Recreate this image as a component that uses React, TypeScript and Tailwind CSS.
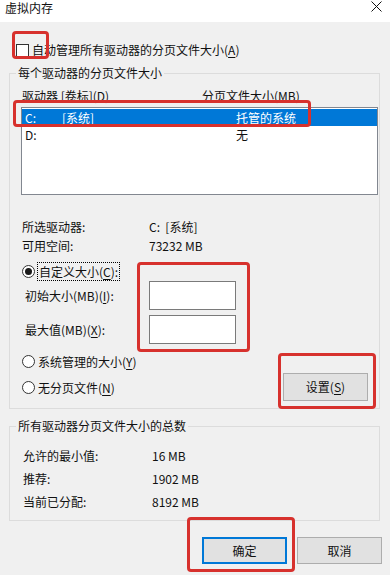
import React from 'react';

// Underlined access key, e.g. (A)
const Key: React.FC<{ k: string }> = ({ k }) => (
  <span>
    (<span className="underline underline-offset-2">{k}</span>)
  </span>
);

const Radio: React.FC<{ checked?: boolean }> = ({ checked }) => (
  <span className="flex h-[13px] w-[13px] shrink-0 items-center justify-center rounded-full border border-[#333333] bg-white">
    {checked && <span className="h-[7px] w-[7px] rounded-full bg-[#1a1a1a]" />}
  </span>
);

const RedBox: React.FC<{ className: string }> = ({ className }) => (
  <div className={`pointer-events-none absolute rounded-[4px] border-[3px] border-[#d7312d] ${className}`} />
);

const App: React.FC = () => {
  return (
    <div className="relative h-[575px] w-[390px] overflow-hidden bg-[#f0f0f0] font-['Noto_Sans_CJK_SC','Noto_Sans',sans-serif] text-[12px] leading-[16px] text-[#111]">
      {/* Title bar */}
      <div className="flex h-[22px] items-start justify-between bg-white">
        <span className="pl-[5px] pt-[0px] leading-[15px]">虚拟内存</span>
        <svg className="mr-[8px] mt-[1px]" width="11" height="11" viewBox="0 0 11 11">
          <path d="M0.5 0.5 L10.5 10.5 M10.5 0.5 L0.5 10.5" stroke="#111" strokeWidth="1" />
        </svg>
      </div>

      {/* Auto manage checkbox */}
      <div className="mt-[20px] flex h-[16px] items-center pl-[16px]">
        <span className="h-[13px] w-[13px] border border-[#333333] bg-white" />
        <span className="ml-[3px]">
          自动管理所有驱动器的分页文件大小<Key k="A" />
        </span>
      </div>

      {/* Per-drive group */}
      <fieldset className="ml-[9px] mt-[7px] w-[371px] border border-[#dcdcdc] px-0 pb-[7px]">
        <legend className="ml-[6px] px-[2px] leading-[16px]">每个驱动器的分页文件大小</legend>

        <div className="mt-[7px] flex h-[16px] pl-[12px]">
          <span className="w-[180px]">驱动器 [卷标](D)</span>
          <span>分页文件大小(MB)</span>
        </div>

        <div className="ml-[11px] mt-[3px] h-[88px] w-[357px] border border-[#828790] bg-white pt-[1px]">
          <div className="flex h-[17px] items-center bg-[#0078d7] pl-[3px] text-white">
            <span className="w-[37px]">C:</span>
            <span className="w-[174px]">[系统]</span>
            <span>托管的系统</span>
          </div>
          <div className="flex h-[17px] items-center pl-[3px]">
            <span className="w-[211px]">D:</span>
            <span>无</span>
          </div>
        </div>

        <div className="mt-[22px] pl-[12px]">
          <div className="flex h-[19px] items-center">
            <span className="w-[127px]">所选驱动器:</span>
            <span>C:&nbsp;&nbsp;[系统]</span>
          </div>
          <div className="flex h-[19px] items-center">
            <span className="w-[127px]">可用空间:</span>
            <span>73232 MB</span>
          </div>
        </div>

        <div className="mt-[7px] flex h-[19px] items-center pl-[12px]">
          <Radio checked />
          <span className="ml-[2px] border border-dotted border-black px-[1px] leading-[17px]">
            自定义大小<Key k="C" />:
          </span>
        </div>

        <div className="flex h-[29px] items-center pl-[15px]">
          <span className="w-[124px]">
            初始大小(MB)<Key k="I" />:
          </span>
          <span className="h-[29px] w-[87px] border border-[#7a7a7a] bg-white" />
        </div>
        <div className="mt-[5px] flex h-[29px] items-center pl-[15px]">
          <span className="w-[124px]">
            最大值(MB)<Key k="X" />:
          </span>
          <span className="h-[29px] w-[87px] border border-[#7a7a7a] bg-white" />
        </div>

        <div className="mt-[8px] flex items-start">
          <div className="pl-[12px]">
            <div className="flex h-[19px] items-center">
              <Radio />
              <span className="ml-[3px]">
                系统管理的大小<Key k="Y" />
              </span>
            </div>
            <div className="mt-[7px] flex h-[19px] items-center">
              <Radio />
              <span className="ml-[3px]">
                无分页文件<Key k="N" />
              </span>
            </div>
          </div>
          <button className="ml-auto mr-[11px] mt-[21px] h-[28px] w-[85px] border border-[#adadad] bg-[#e1e1e1]">
            设置<Key k="S" />
          </button>
        </div>
      </fieldset>

      {/* Totals group */}
      <fieldset className="ml-[9px] mt-[9px] w-[371px] border border-[#dcdcdc] px-0 pb-[7px]">
        <legend className="ml-[6px] px-[2px] leading-[16px]">所有驱动器分页文件大小的总数</legend>
        <div className="mt-[10px] pl-[13px]">
          <div className="flex h-[23px] items-center">
            <span className="w-[129px]">允许的最小值:</span>
            <span>16 MB</span>
          </div>
          <div className="flex h-[23px] items-center">
            <span className="w-[129px]">推荐:</span>
            <span>1902 MB</span>
          </div>
          <div className="flex h-[23px] items-center">
            <span className="w-[129px]">当前已分配:</span>
            <span>8192 MB</span>
          </div>
        </div>
      </fieldset>

      {/* Dialog buttons */}
      <div className="mt-[16px] flex justify-end gap-[10px] pr-[8px]">
        <button className="h-[27px] w-[85px] border-2 border-[#0078d7] bg-[#e1e1e1]">确定</button>
        <button className="h-[27px] w-[85px] border border-[#adadad] bg-[#e1e1e1]">取消</button>
      </div>

      {/* Red annotation boxes */}
      <RedBox className="left-[12px] top-[31px] h-[28px] w-[37px]" />
      <RedBox className="left-[13px] top-[100px] h-[27px] w-[298px]" />
      <RedBox className="left-[137px] top-[262px] h-[90px] w-[113px]" />
      <RedBox className="left-[278px] top-[353px] h-[56px] w-[98px]" />
      <RedBox className="left-[187px] top-[517px] h-[55px] w-[108px]" />
    </div>
  );
};

export default App;
